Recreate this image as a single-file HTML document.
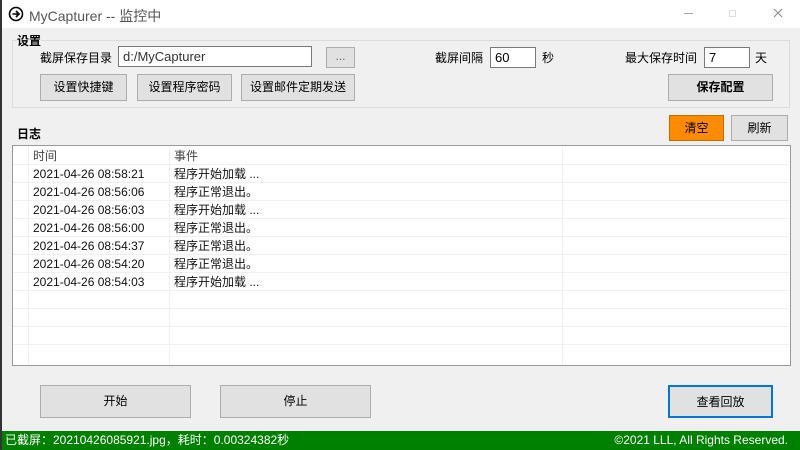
<!DOCTYPE html>
<html><head><meta charset="utf-8"><style>
*{margin:0;padding:0;box-sizing:border-box}
body{width:800px;height:450px;overflow:hidden;background:#f0f0f0;font-family:"Liberation Sans","Noto Sans CJK SC",sans-serif;font-size:12px;color:#000;position:relative}
.a{position:absolute}
.btn{position:absolute;background:#e1e1e1;border:1px solid #adadad;text-align:center;font-size:12px}
.inp{position:absolute;background:#fff;border:1px solid #7a7a7a;padding-left:4px;font-size:13px}
.row{position:absolute;left:13px;width:776px;height:18px;border-bottom:1px solid #f0f0f0;font-size:12px;line-height:18px;color:#111}
.row span{position:absolute}
</style></head><body>
<div class="a" style="left:0;top:0;width:2px;height:450px;background:#333"></div>
<div class="a" style="left:2px;top:0;width:798px;height:28px;background:#fff"></div>
<svg class="a" style="left:8px;top:6px" width="16" height="16" viewBox="0 0 16 16"><circle cx="8" cy="8" r="6.5" fill="none" stroke="#000" stroke-width="1.6"/><path d="M4.5 8h6M8 5l3 3-3 3" fill="none" stroke="#000" stroke-width="1.6"/></svg>
<div class="a" style="left:29px;top:6px;font-size:14px;color:#555">MyCapturer -- 监控中</div>
<div class="a" style="left:684px;top:13px;width:9px;height:1px;background:#aaa"></div>
<div class="a" style="left:729px;top:10px;width:7px;height:7px;border:1px solid #ddd"></div>
<svg class="a" style="left:773px;top:8px" width="10" height="10" viewBox="0 0 10 10"><path d="M1 1l8 8M9 1l-8 8" stroke="#888" stroke-width="1"/></svg>
<div class="a" style="left:12px;top:40px;width:778px;height:68px;border:1px solid #dcdcdc"></div>
<div class="a" style="left:17px;top:32px;font-size:12px;font-weight:bold;background:#f0f0f0">设置</div>
<div class="a" style="left:40px;top:49px">截屏保存目录</div>
<div class="inp" style="left:118px;top:46px;width:194px;height:21px;line-height:19px;color:#333">d:/MyCapturer</div>
<div class="btn" style="left:326px;top:47px;width:29px;height:21px;line-height:17px;color:#666">...</div>
<div class="a" style="left:435px;top:49px">截屏间隔</div>
<div class="inp" style="left:490px;top:47px;width:46px;height:21px;line-height:19px">60</div>
<div class="a" style="left:542px;top:49px">秒</div>
<div class="a" style="left:625px;top:49px">最大保存时间</div>
<div class="inp" style="left:704px;top:47px;width:46px;height:21px;line-height:19px">7</div>
<div class="a" style="left:755px;top:49px">天</div>
<div class="btn" style="left:40px;top:74px;width:87px;height:27px;line-height:25px">设置快捷键</div>
<div class="btn" style="left:137px;top:74px;width:95px;height:27px;line-height:25px">设置程序密码</div>
<div class="btn" style="left:241px;top:74px;width:114px;height:27px;line-height:25px">设置邮件定期发送</div>
<div class="btn" style="left:668px;top:74px;width:105px;height:27px;line-height:25px;font-weight:bold">保存配置</div>
<div class="a" style="left:17px;top:125px;font-weight:bold">日志</div>
<div class="btn" style="left:669px;top:115px;width:55px;height:26px;line-height:24px;background:#ff8c00;border-color:#c07000">清空</div>
<div class="btn" style="left:731px;top:115px;width:57px;height:26px;line-height:24px">刷新</div>
<div class="a" style="left:12px;top:145px;width:779px;height:221px;background:#fff;border:1px solid #999"></div>
<div class="a" style="left:28px;top:146px;width:1px;height:219px;background:#f0f0f0"></div>
<div class="a" style="left:169px;top:146px;width:1px;height:219px;background:#f0f0f0"></div>
<div class="a" style="left:562px;top:146px;width:1px;height:219px;background:#f0f0f0"></div>
<div class="row" style="top:147px;color:#444"><span style="left:20px">时间</span><span style="left:161px">事件</span></div>
<div class="row" style="top:165px"><span style="left:20px">2021-04-26 08:58:21</span><span style="left:161px">程序开始加载 ...</span></div>
<div class="row" style="top:183px"><span style="left:20px">2021-04-26 08:56:06</span><span style="left:161px">程序正常退出。</span></div>
<div class="row" style="top:201px"><span style="left:20px">2021-04-26 08:56:03</span><span style="left:161px">程序开始加载 ...</span></div>
<div class="row" style="top:219px"><span style="left:20px">2021-04-26 08:56:00</span><span style="left:161px">程序正常退出。</span></div>
<div class="row" style="top:237px"><span style="left:20px">2021-04-26 08:54:37</span><span style="left:161px">程序正常退出。</span></div>
<div class="row" style="top:255px"><span style="left:20px">2021-04-26 08:54:20</span><span style="left:161px">程序正常退出。</span></div>
<div class="row" style="top:273px"><span style="left:20px">2021-04-26 08:54:03</span><span style="left:161px">程序开始加载 ...</span></div>
<div class="row" style="top:291px"></div><div class="row" style="top:309px"></div><div class="row" style="top:327px"></div><div class="row" style="top:345px;border:0"></div>
<div class="btn" style="left:40px;top:385px;width:151px;height:33px;line-height:31px">开始</div>
<div class="btn" style="left:220px;top:385px;width:151px;height:33px;line-height:31px">停止</div>
<div class="btn" style="left:668px;top:385px;width:105px;height:33px;line-height:31px;border:2px solid #0078d7">查看回放</div>
<div class="a" style="left:2px;top:431px;width:798px;height:19px;background:#008000;color:#fff;font-size:12px;line-height:19px">
<span style="position:absolute;left:3px">已截屏：20210426085921.jpg，耗时：0.00324382秒</span>
<span style="position:absolute;right:12px">©2021 LLL, All Rights Reserved.</span></div>
</body></html>
